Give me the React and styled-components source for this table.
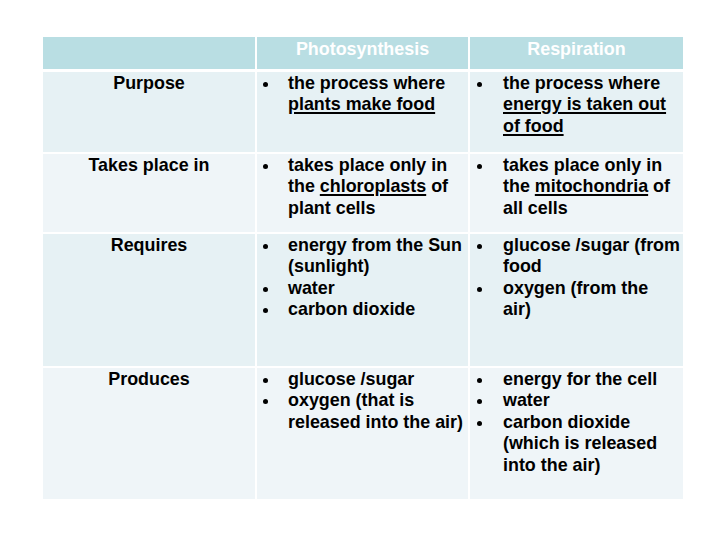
import React from "react";
import styled, { createGlobalStyle } from "styled-components";

const GlobalStyle = createGlobalStyle`
  html, body {
    margin: 0;
    padding: 0;
    background: #ffffff;
  }
  body {
    font-family: "Liberation Sans", Arial, sans-serif;
  }
`;

// underlined key words
const U = styled.span`
  text-decoration: underline;
  text-decoration-thickness: 1.5px;
  text-underline-offset: 2px;
`;

const rows = [
  {
    label: "Purpose",
    photo: [
      <>the process where<br /><U>plants make food</U></>,
    ],
    resp: [
      <>the process where<br /><U>energy is taken out</U><br /><U>of food</U></>,
    ],
    height: 80,
    tone: "a",
  },
  {
    label: "Takes place in",
    photo: [
      <>takes place only in<br />the <U>chloroplasts</U> of<br />plant cells</>,
    ],
    resp: [
      <>takes place only in<br />the <U>mitochondria</U> of<br />all cells</>,
    ],
    height: 78,
    tone: "b",
  },
  {
    label: "Requires",
    photo: [
      <>energy from the Sun<br />(sunlight)</>,
      "water",
      "carbon dioxide",
    ],
    resp: [
      <>glucose /sugar (from<br />food</>,
      <>oxygen (from the<br />air)</>,
    ],
    height: 132,
    tone: "a",
  },
  {
    label: "Produces",
    photo: [
      "glucose /sugar",
      <>oxygen (that is<br />released into the air)</>,
    ],
    resp: [
      "energy for the cell",
      "water",
      <>carbon dioxide<br />(which is released<br />into the air)</>,
    ],
    height: 131,
    tone: "b",
  },
];

const App = () => {
  return (
    <>
      <GlobalStyle />
      <Page>
        <Table>
          {/* header */}
          <HeadCell />
          <HeadCell>Photosynthesis</HeadCell>
          <HeadCell>Respiration</HeadCell>

          {rows.map((row) => (
            <React.Fragment key={row.label}>
              <LabelCell $tone={row.tone} $h={row.height}>
                {row.label}
              </LabelCell>
              <BodyCell $tone={row.tone} $h={row.height} $indent={5}>
                <List>
                  {row.photo.map((item, i) => (
                    <Item key={i}>
                      <Dot />
                      <Text>{item}</Text>
                    </Item>
                  ))}
                </List>
              </BodyCell>
              <BodyCell $tone={row.tone} $h={row.height} $indent={6}>
                <List>
                  {row.resp.map((item, i) => (
                    <Item key={i}>
                      <Dot $w={27} />
                      <Text>{item}</Text>
                    </Item>
                  ))}
                </List>
              </BodyCell>
            </React.Fragment>
          ))}
        </Table>
      </Page>
    </>
  );
};

// styled components
const Page = styled.div`
  width: 720px;
  height: 540px;
  padding: 37px 0 0 43px;
  box-sizing: border-box;
  background: #ffffff;
`;

const Table = styled.div`
  display: grid;
  grid-template-columns: 212px 211px 213px;
  column-gap: 2px;
  row-gap: 2px;
  width: 640px;
  font-weight: 700;
  font-size: 17.9px;
  line-height: 21.4px;
  color: #000000;

  & > :nth-child(-n + 3) {
    margin-bottom: 1px;
  }
`;

const HeadCell = styled.div`
  background: #b9dee3;
  color: #ffffff;
  text-align: center;
  padding-top: 2px;
  height: 32px;
  box-sizing: border-box;
`;

const toneColor = {
  a: "#e6f1f4",
  b: "#eff5f8",
};

const LabelCell = styled.div`
  background: ${(p) => toneColor[p.$tone]};
  height: ${(p) => p.$h}px;
  text-align: center;
  padding-top: 1px;
  box-sizing: border-box;
`;

const BodyCell = styled.div`
  background: ${(p) => toneColor[p.$tone]};
  height: ${(p) => p.$h}px;
  padding: 1px 0 0 ${(p) => p.$indent}px;
  box-sizing: border-box;
`;

const List = styled.ul`
  list-style: none;
  margin: 0;
  padding: 0;
`;

const Item = styled.li`
  display: flex;
  align-items: flex-start;
`;

const Text = styled.span`
  white-space: nowrap;
`;

const Dot = styled.i`
  flex: 0 0 ${(p) => p.$w || 26}px;
  height: 21.4px;
  display: flex;
  align-items: center;
  &::before {
    content: "";
    width: 5px;
    height: 5px;
    margin-left: 1px;
    margin-top: 1px;
    border-radius: 50%;
    background: #000000;
  }
`;

export default App;
